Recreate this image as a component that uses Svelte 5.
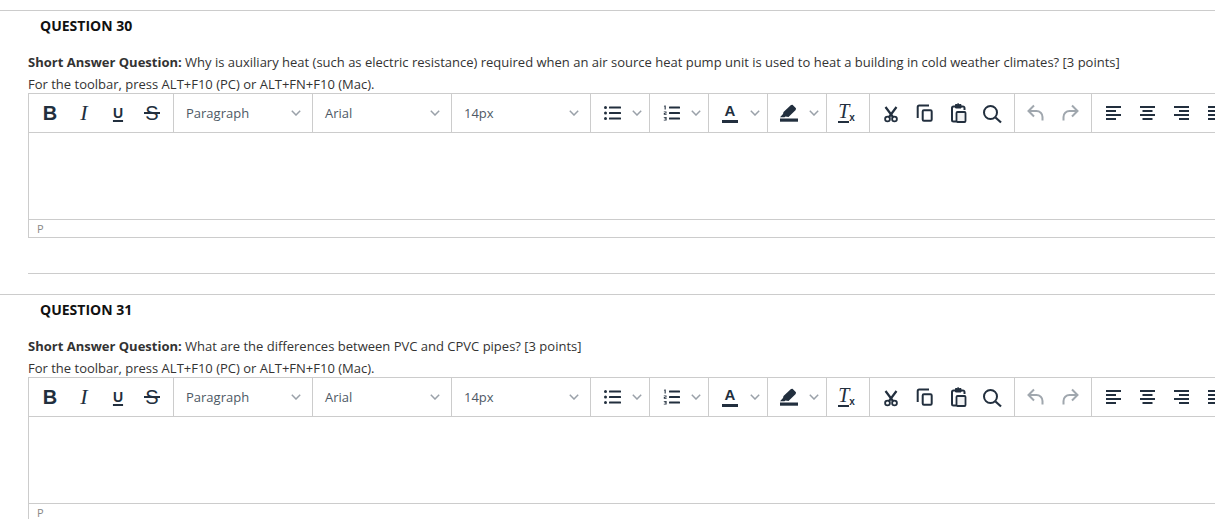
<script lang="ts">
  const questions = [
    {
      n: 30,
      text: 'Why is auxiliary heat (such as electric resistance) required when an air source heat pump unit is used to heat a building in cold weather climates? [3 points]'
    },
    { n: 31, text: 'What are the differences between PVC and CPVC pipes? [3 points]' }
  ];
  const selects = [
    { label: 'Paragraph' },
    { label: 'Arial' },
    { label: '14px' }
  ];
</script>

{#snippet chevron()}
  <svg class="chev" width="10" height="6" viewBox="0 0 10 6"><path d="M.8.8 5 5l4.2-4.2" fill="none" stroke="#9aa1a9" stroke-width="1.5" /></svg>
{/snippet}

{#snippet ic(d: string)}
  <span class="btn"><svg width="24" height="24" viewBox="0 0 24 24"><path {d} fill="currentColor" fill-rule="evenodd" /></svg></span>
{/snippet}

{#snippet toolbar()}
  <div class="toolbar">
    <div class="group">
      <span class="btn letter bold">B</span>
      <span class="btn letter ital">I</span>
      <span class="btn letter under">U</span>
      <span class="btn letter strike">S</span>
    </div>
    {#each selects as s}
      <div class="select"><span>{s.label}</span>{@render chevron()}</div>
    {/each}
    <div class="group split">
      <span class="btn"><svg width="24" height="24" viewBox="0 0 24 24" fill="currentColor"><circle cx="5.5" cy="6.5" r="1.5" /><circle cx="5.5" cy="12" r="1.5" /><circle cx="5.5" cy="17.5" r="1.5" /><rect x="9" y="5.5" width="12" height="2" rx=".5" /><rect x="9" y="11" width="12" height="2" rx=".5" /><rect x="9" y="16.5" width="12" height="2" rx=".5" /></svg></span>
      {@render chevron()}
    </div>
    <div class="group split">
      <span class="btn"><svg width="24" height="24" viewBox="0 0 24 24" fill="currentColor"><rect x="10" y="5.5" width="11" height="2" rx=".5" /><rect x="10" y="11" width="11" height="2" rx=".5" /><rect x="10" y="16.5" width="11" height="2" rx=".5" /><path d="M5.5 4.500h1.200v4H5.600V5.400H4.800zM4.800 10.400h2.700v2.100H5.900v.6h1.700v.7H4.800v-2h1.700v-.7H4.800zM4.800 16h2.800v3.400H4.800v-.7h1.700v-.7H5.400v-.6h1.100v-.7H4.800z" /></svg></span>
      {@render chevron()}
    </div>
    <div class="group split">
      <span class="btn color"><span class="glyph">A</span></span>
      {@render chevron()}
    </div>
    <div class="group split">
      <span class="btn"><svg width="24" height="24" viewBox="0 0 24 24" fill="currentColor"><path d="M3 16.300 6 13l.5-2L14 4l1.500-.3L19 7.200l-.3 1.800-7.200 7-3-.5-1 .8z" /><rect x="3" y="17.500" width="18" height="3.200" /></svg></span>
      {@render chevron()}
    </div>
    <div class="group">
      <span class="btn clear"><span class="glyph">T</span><small>x</small></span>
    </div>
    <div class="group">
      <span class="btn"><svg width="24" height="24" viewBox="0 0 24 24" fill="none" stroke="currentColor" stroke-width="1.800"><circle cx="8.500" cy="18" r="2.400" /><circle cx="15.500" cy="18" r="2.400" /><path d="M6.500 6 14 16M17.500 6 10 16" stroke-width="2.200" /></svg></span>
      <span class="btn"><svg width="24" height="24" viewBox="0 0 24 24" fill="none" stroke="currentColor" stroke-width="2"><path d="M4.700 17V6A1.500 1.500 0 0 1 6.200 4.500H16" /><rect x="9.700" y="9.300" width="9" height="10.400" rx="1.200" /></svg></span>
      <span class="btn"><svg width="24" height="24" viewBox="0 0 24 24" fill="none" stroke="currentColor" stroke-width="2"><path d="M8 5.500H6.500A1.500 1.500 0 0 0 5 7v12a1.500 1.500 0 0 0 1.500 1.500H9M14 5.500h1.500A1.500 1.500 0 0 1 17.500 7v2" /><path d="M8.500 7V3.500h1.500a1.500 1.500 0 0 1 2.500 0H14V7z" fill="currentColor" stroke-width="1" /><rect x="9.500" y="11" width="9" height="10" rx="1" stroke-width="1.800" fill="#f1f2f3" /></svg></span>
      <span class="btn"><svg width="24" height="24" viewBox="0 0 24 24" fill="none" stroke="currentColor" stroke-width="2"><circle cx="9.500" cy="11.500" r="6.500" /><path d="m14.500 16.500 5.500 5" stroke-width="2.200" /></svg></span>
    </div>
    <div class="group">
      <span class="btn off"><svg width="24" height="24" viewBox="0 0 24 24" fill="none" stroke="currentColor" stroke-width="2"><path d="M10 4.500 4.500 10 10 15.500M5 10h7.500a6 6 0 0 1 6 6v3.500" /></svg></span>
      <span class="btn off"><svg width="24" height="24" viewBox="0 0 24 24" fill="none" stroke="currentColor" stroke-width="2"><path d="M14 4.500 19.500 10 14 15.500M19 10h-7.500a6 6 0 0 0-6 6v3.500" /></svg></span>
    </div>
    <div class="group">
      {@render ic('M5 5h15v2H5zM5 9h10v2H5zM5 13h15v2H5zM5 17h10v2H5z')}
      {@render ic('M5 5h15v2H5zM7.500 9h10v2h-10zM5 13h15v2H5zM7.500 17h10v2h-10z')}
      {@render ic('M5 5h15v2H5zM10 9h10v2H10zM5 13h15v2H5zM10 17h10v2H10z')}
      {@render ic('M5 5h15v2H5zM5 9h15v2H5zM5 13h15v2H5zM5 17h15v2H5z')}
    </div>
  </div>
{/snippet}

<main class="page">
  {#each questions as q, i}
    <section class="question">
      <h2>QUESTION {q.n}</h2>
      <div class="body">
        <p class="prompt"><strong>Short Answer Question:</strong> {q.text}</p>
        <p class="hint">For the toolbar, press ALT+F10 (PC) or ALT+FN+F10 (Mac).</p>
        <div class="editor">
          {@render toolbar()}
          <div class="area"></div>
          <div class="status">p</div>
        </div>
        {#if i === 0}<hr />{/if}
      </div>
    </section>
  {/each}
</main>

<style>
  :global(body) {
    overflow: hidden;
  }

  .page {
    height: 519px;
    overflow: hidden;
    padding-top: 10px;
    box-sizing: border-box;
    font-family: "Open Sans", sans-serif;
    color: #333;
    background: #fff;
  }

  .question {
    border-top: 1px solid #ccc;
    margin-bottom: 20px;
  }

  h2 {
    margin: 0;
    padding: 5px 0 0 40px;
    height: 33px;
    box-sizing: border-box;
    font-size: 14px;
    line-height: 20px;
    font-weight: 700;
    color: #111;
  }

  .body {
    padding: 7px 0 0 28px;
  }

  p {
    margin: 0;
    font-size: 13px;
    line-height: 22px;
    white-space: nowrap;
  }

  .prompt strong {
    font-weight: 700;
  }

  .editor {
    width: 1240px;
    border: 1px solid #ccc;
    border-right: 0;
    margin-top: -2px;
  }

  .toolbar {
    display: flex;
    height: 38px;
    color: #222f3e;
  }

  .group {
    display: flex;
    align-items: center;
    flex: none;
    padding: 0 4px;
    border-right: 1px solid #ccc;
  }

  .group:last-child {
    border-right: 0;
  }

  .split {
    width: 58px;
    padding: 0;
  }

  .split .btn {
    width: 42px;
  }

  .split .chev {
    margin-left: -1px;
  }

  .btn {
    display: flex;
    align-items: center;
    justify-content: center;
    width: 34px;
    height: 34px;
    flex: none;
  }

  .off {
    color: #a0a7ae;
  }

  .letter {
    font-family: "Liberation Sans", sans-serif;
    line-height: 1;
  }

  .bold {
    font-size: 20px;
    font-weight: 700;
  }

  .ital {
    font-family: "Liberation Serif", serif;
    font-style: italic;
    font-size: 22px;
  }

  .under {
    font-size: 14px;
    font-weight: 700;
    text-decoration: underline;
    text-underline-offset: 2px;
    text-decoration-thickness: 2px;
  }

  .strike {
    position: relative;
    font-size: 20px;
  }

  .strike::after {
    content: "";
    position: absolute;
    left: 9px;
    top: 16px;
    width: 16px;
    height: 2px;
    background: currentColor;
  }

  .color .glyph {
    font-family: "Liberation Sans", sans-serif;
    font-size: 15px;
    font-weight: 700;
    line-height: 16px;
    padding: 0 3px 1px;
    border-bottom: 3px solid currentColor;
  }

  .clear {
    align-items: flex-start;
    padding: 6px 3px 0 0;
    box-sizing: border-box;
  }

  .clear .glyph {
    font-family: "Liberation Serif", serif;
    font-style: italic;
    font-size: 20px;
    line-height: 19px;
    border-bottom: 2px solid currentColor;
  }

  .clear small {
    font-family: "Liberation Sans", sans-serif;
    font-weight: 700;
    font-size: 10px;
    margin-top: 10px;
  }

  .select {
    display: flex;
    flex: none;
    align-items: center;
    justify-content: space-between;
    width: 139px;
    box-sizing: border-box;
    padding: 0 11px 0 12px;
    border-right: 1px solid #ccc;
    font-size: 13px;
    color: #4e5965;
  }

  .chev {
    flex: none;
  }

  .area {
    height: 86px;
    border-top: 1px solid #ccc;
  }

  .status {
    height: 17px;
    border-top: 1px solid #ccc;
    padding-left: 8px;
    font-size: 11px;
    line-height: 17px;
    color: #888;
    text-transform: uppercase;
  }

  hr {
    margin: 35px 0 0;
    border: 0;
    border-top: 1px solid #ccc;
  }
</style>
